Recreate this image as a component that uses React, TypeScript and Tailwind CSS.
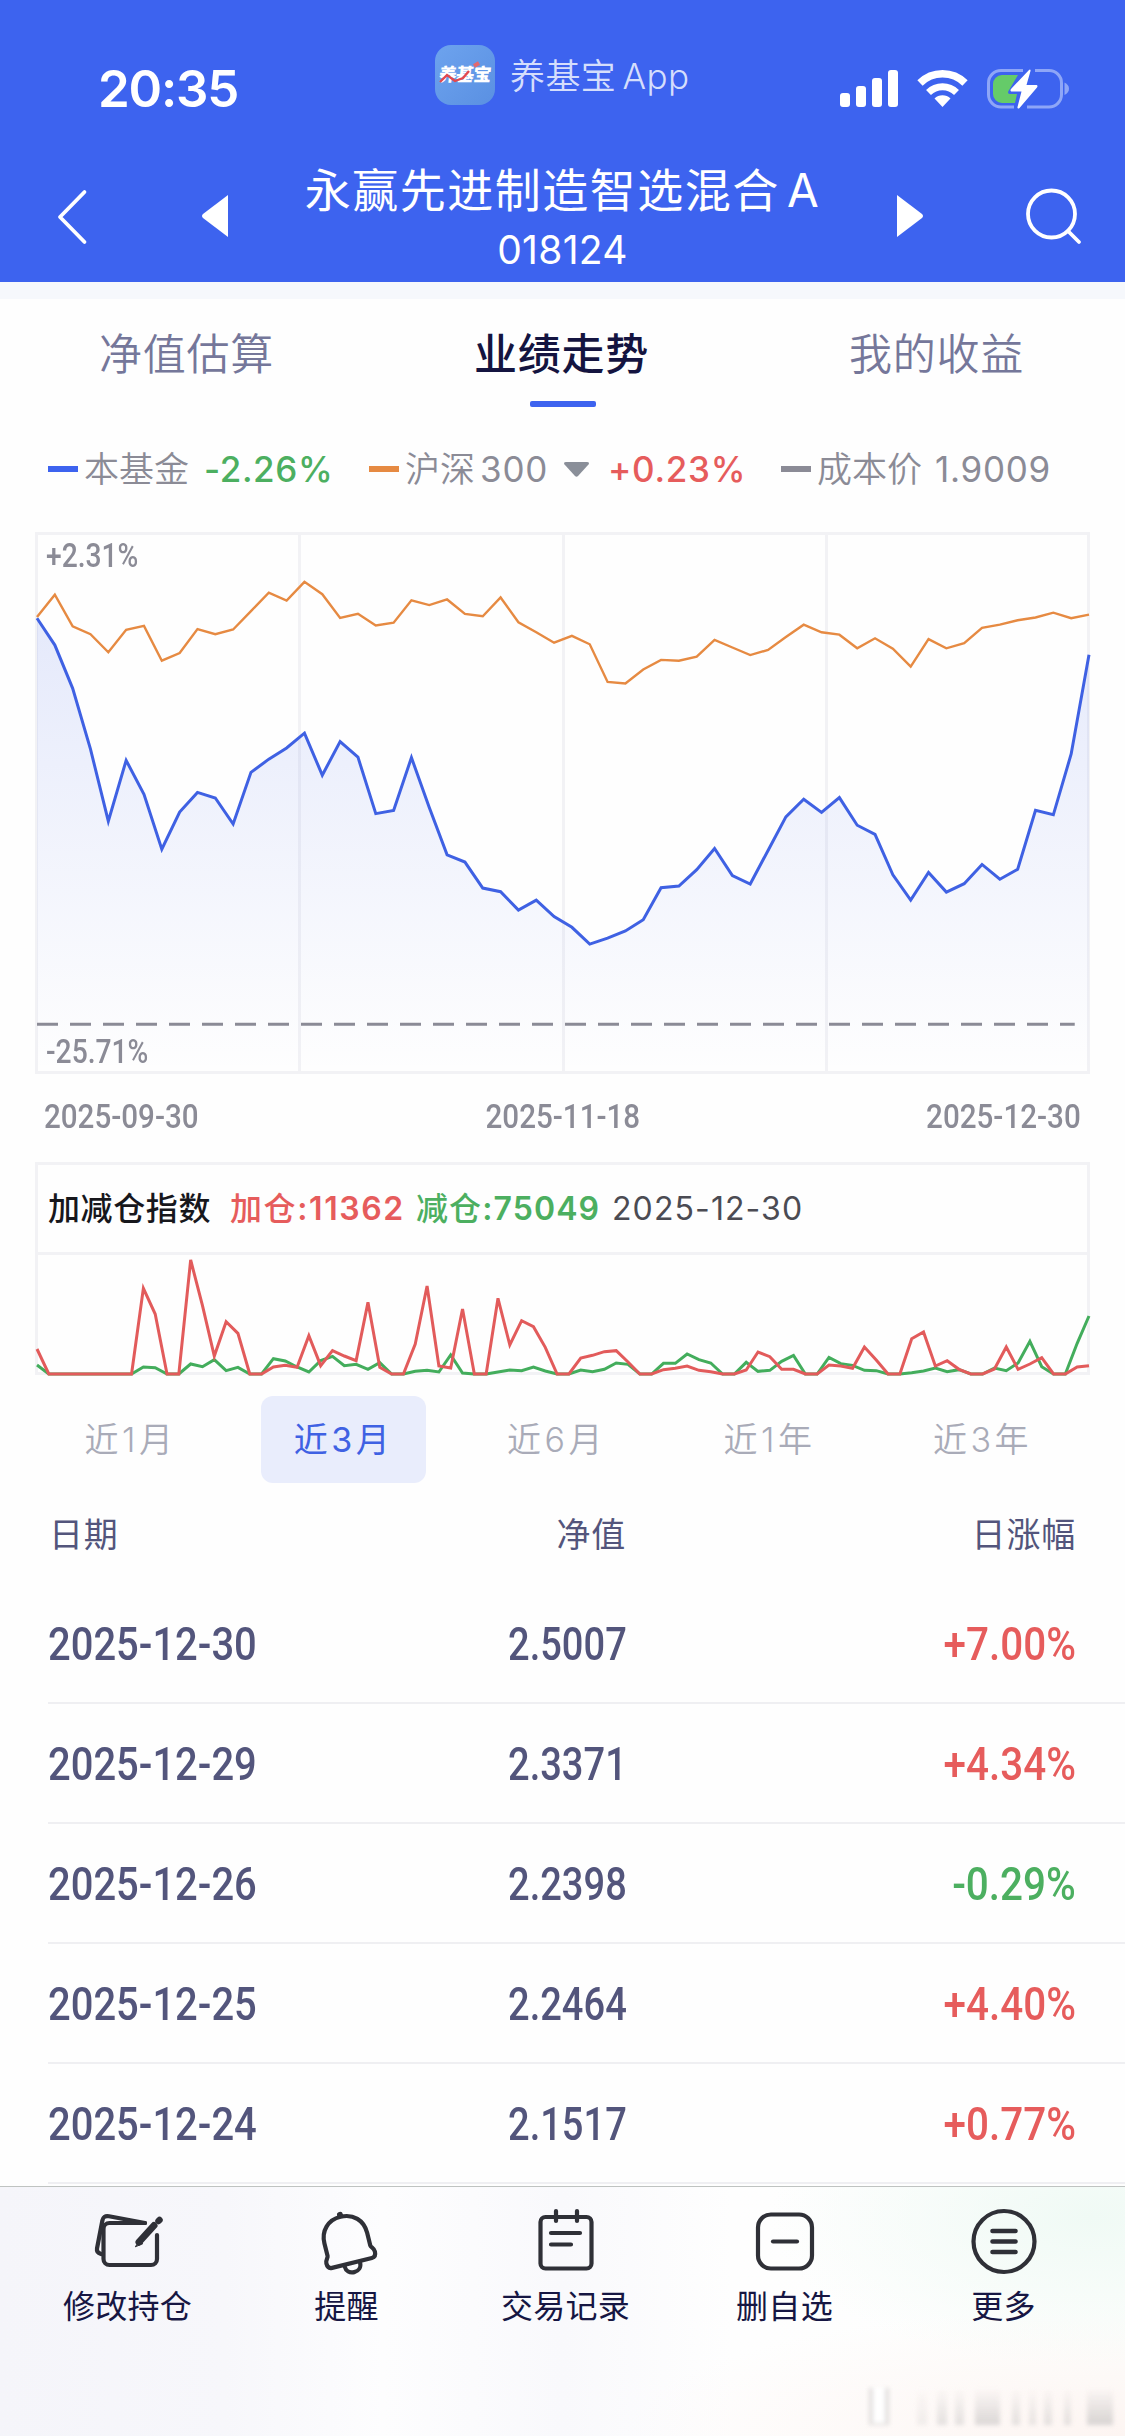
import type { ReactNode } from "react";

// y positions, one per trading day (top of the plot is 33, bottom is 1376)
const fundLine = [
  243, 310, 418, 570, 750, 598, 683, 820, 727, 678, 692, 757, 628, 595, 567, 530, 635, 551, 590, 731,
  723, 591, 716, 834, 852, 917, 926, 972, 947, 988, 1015, 1057, 1042, 1024, 996, 916, 912, 871, 818, 886,
  907, 823, 739, 695, 728, 691, 760, 783, 884, 947, 878, 927, 906, 858, 895, 870, 723, 734, 582, 334,
];

const indexLine = [
  240, 184, 263, 283, 328, 272, 262, 349, 330, 270, 283, 271, 225, 179, 199, 152, 183, 242, 232, 261,
  254, 198, 210, 196, 232, 238, 191, 253, 278, 304, 287, 308, 402, 406, 371, 347, 349, 339, 297, 316,
  335, 322, 290, 259, 278, 284, 318, 293, 319, 364, 295, 318, 305, 267, 259, 248, 241, 229, 243, 234,
];

// y positions, one per day (top of the plot is 310, bottom is 670)
const addLine = [
  592, 667, 667, 667, 667, 667, 667, 667, 667, 410, 487, 667, 667, 325, 462, 613, 510, 545, 667, 667,
  646, 641, 647, 552, 642, 597, 613, 627, 452, 647, 667, 667, 577, 403, 643, 649, 472, 667, 667, 440,
  580, 507, 525, 587, 667, 667, 619, 611, 600, 597, 631, 667, 667, 654, 650, 643, 656, 660, 667, 667,
  655, 601, 615, 653, 653, 667, 667, 640, 643, 650, 586, 625, 667, 667, 561, 541, 643, 627, 653, 667,
  667, 652, 586, 653, 637, 618, 667, 667, 646, 642,
];

const reduceLine = [
  640, 667, 667, 667, 667, 667, 667, 667, 667, 646, 648, 667, 667, 637, 645, 624, 657, 647, 667, 667,
  621, 628, 646, 661, 627, 614, 642, 638, 653, 633, 667, 667, 659, 656, 661, 610, 664, 667, 667, 661,
  655, 657, 646, 658, 667, 667, 655, 660, 653, 634, 638, 667, 667, 635, 635, 607, 624, 634, 667, 667,
  632, 659, 656, 629, 611, 667, 667, 617, 636, 641, 656, 657, 667, 667, 663, 658, 649, 660, 654, 667,
  667, 649, 657, 634, 569, 645, 667, 667, 575, 493,
];

const toPoints = (values: number[]) =>
  values.map((v, i) => `${i * 10},${v}`).join(" ");

const rows = [
  { date: "2025-12-30", value: "2.5007", change: "+7.00%" },
  { date: "2025-12-29", value: "2.3371", change: "+4.34%" },
  { date: "2025-12-26", value: "2.2398", change: "-0.29%" },
  { date: "2025-12-25", value: "2.2464", change: "+4.40%" },
  { date: "2025-12-24", value: "2.1517", change: "+0.77%" },
];

const periods = ["近1月", "近3月", "近6月", "近1年", "近3年"];

const smudges = [
  "ml-[28px] w-[10px] opacity-30",
  "ml-[10px] w-[10px] opacity-60",
  "ml-[8px] w-[9px] opacity-60",
  "ml-[11px] w-[25px] opacity-80",
  "ml-[12px] w-[8px] opacity-60",
  "ml-[9px] w-[7px] opacity-50",
  "ml-[8px] w-[8px] opacity-60",
  "ml-[12px] w-[7px] opacity-60",
  "ml-[16px] w-[26px] opacity-90",
];

function StatusBar() {
  return (
    <div className="flex h-[150px] w-full">
      <div className="flex w-[435px] items-start pt-[58px] pl-[98px]">
        <span className="text-[51px] leading-[62px] font-semibold tracking-[-1.2px] text-white">
          20:35
        </span>
      </div>
      <div className="flex w-[405px] items-start pt-[45px]">
        <div className="relative flex size-[60px] items-center justify-center rounded-[16px] bg-linear-to-br from-[#6da3ee] to-[#5a90e2]">
          <span className="-skew-x-6 text-[18px] leading-[20px] font-black tracking-[-0.8px] whitespace-nowrap text-white">
            养基宝
          </span>
          <svg className="absolute inset-0" viewBox="0 0 60 60" fill="none">
            <path d="M5 37l7-7 8 6 8-3 6-7" stroke="#e2484f" strokeWidth="2.400" />
            <path d="M39 21l5-3" stroke="#e2686f" strokeWidth="4" />
          </svg>
        </div>
        <span className="mt-[8px] ml-[15px] text-[35px] leading-[46px] font-[350] tracking-[0.4px] [word-spacing:-4px] whitespace-nowrap text-[#d5defc]">
          养基宝 App
        </span>
      </div>
      <div className="flex items-start gap-[19px] pt-[69px]">
        <svg width="58" height="39" viewBox="0 0 58 39" fill="white">
          <rect x="0" y="24" width="10" height="14" rx="3" />
          <rect x="16" y="17" width="10" height="21" rx="3" />
          <rect x="32" y="9" width="10" height="29" rx="3" />
          <rect x="48" y="1" width="10" height="37" rx="3" />
        </svg>
        <svg width="51" height="39" viewBox="0 0 51 39" fill="none">
          <path d="M3 14a32 32 0 0 1 45 0" stroke="white" strokeWidth="7.500" />
          <path d="M11.5 23.500a20 20 0 0 1 28 0" stroke="white" strokeWidth="7" />
          <path d="M25.500 38L17.500 29.500a11.500 11.500 0 0 1 16 0z" fill="white" />
        </svg>
        <svg width="84" height="41" viewBox="0 0 84 41" fill="none">
          <path
            d="M36 1.500H14a12.500 12.500 0 0 0-12.500 12.500v11.500a12.500 12.500 0 0 0 12.500 12.500h13M40 38h22a12.500 12.500 0 0 0 12.500-12.500V14a12.500 12.500 0 0 0-12.500-12.500H48"
            stroke="#8ea6f7"
            strokeWidth="3"
          />
          <path d="M77.500 13.500c3 1.500 4.500 3.500 4.500 6.200s-1.500 4.800-4.500 6.200z" fill="#8ea6f7" />
          <path
            d="M31 6H15a9 9 0 0 0-9 9v10a9 9 0 0 0 9 9h13l2-9h-7c-2 0-2.500-1.500-1.500-3z"
            fill="#65cb69"
          />
          <path
            d="M42 1L24 20c-1 1.200-.5 2.500 1 2.500h9.500L30.500 38c-.4 1.800 1 2 2 1L50 18.500c1-1.300.4-2.500-1-2.500h-9.500L43.500 2c.3-1.500-.6-2-1.500-1z"
            fill="white"
          />
        </svg>
      </div>
    </div>
  );
}

function Header() {
  return (
    <header className="h-[282px] w-full bg-[#3d63ef]">
      <StatusBar />
      <div className="flex h-[132px] items-start justify-between">
        <div className="flex w-[306px] pt-[39px] pl-[56px]">
          <svg width="32" height="56" viewBox="0 0 32 56" fill="none">
            <path
              d="M28.500 3L4 28l24.500 25"
              stroke="white"
              strokeWidth="3.800"
              strokeLinecap="round"
              strokeLinejoin="round"
            />
          </svg>
          <svg className="mt-[5px] ml-[113px]" width="28" height="44" viewBox="0 0 28 44">
            <path d="M27 1v42L2 24q-2-2 0-4z" fill="white" />
          </svg>
        </div>
        <div className="flex w-[513px] flex-col items-center pt-[10px] text-white">
          <h1 className="text-[46px] leading-[60px] font-normal tracking-[1.5px] [word-spacing:-7px] whitespace-nowrap">
            永赢先进制造智选混合 A
          </h1>
          <span className="mt-[6px] text-[39px] leading-[48px] tracking-[0.3px]">
            018124
          </span>
        </div>
        <div className="flex w-[306px] pt-[38px] pl-[77px]">
          <svg className="mt-[6px]" width="28" height="44" viewBox="0 0 28 44">
            <path d="M1 1v42l25-19q2-2 0-4z" fill="white" />
          </svg>
          <svg className="ml-[100px]" width="58" height="58" viewBox="0 0 58 58" fill="none">
            <circle cx="27.500" cy="26" r="23.500" stroke="white" strokeWidth="3.800" />
            <path d="M44 43l11 11" stroke="white" strokeWidth="3.800" strokeLinecap="round" />
          </svg>
        </div>
      </div>
    </header>
  );
}

function Tabs() {
  return (
    <nav className="grid h-[112px] grid-cols-3 text-center text-[43px] leading-[60px] tracking-[0.8px] text-[#75779a]">
      <div className="pt-[25px] pr-[2px] font-[350]">净值估算</div>
      <div className="flex flex-col items-center pt-[25px]">
        <span className="pr-[2px] font-medium text-[#141440]">业绩走势</span>
        <span className="mt-[17px] h-[6px] w-[66px] shrink-0 rounded-[2px] bg-[#3d63ef]" />
      </div>
      <div className="pt-[25px] pr-[2px] font-[350]">我的收益</div>
    </nav>
  );
}

function Legend() {
  return (
    <div className="mt-[30px] flex h-[56px] items-center pl-[48px] text-[35px] leading-[56px] whitespace-nowrap text-[#8b8b96]">
      <div className="flex w-[321px] items-center">
        <i className="mr-[6px] h-[6px] w-[30px] bg-[#3d63ef]" />
        <span className="w-[120px] font-[350]">本基金</span>
        <span className="font-medium tracking-[0.6px] text-[#4caf60]">-2.26%</span>
      </div>
      <div className="flex w-[412px] items-center">
        <i className="mr-[6px] h-[6px] w-[30px] bg-[#e68a42]" />
        <span className="w-[75px] font-[350]">沪深</span>
        <span className="w-[83px] tracking-[0.8px]">300</span>
        <svg className="mr-[18px]" width="27" height="17" viewBox="0 0 27 17">
          <path d="M3 1h21q3 0 1.500 2.500L15 15q-1.500 1.500-3 0L1.500 3.500Q0 1 3 1z" fill="#8a8f99" />
        </svg>
        <span className="font-medium tracking-[0.7px] text-[#e65c5c]">+0.23%</span>
      </div>
      <div className="flex items-center">
        <i className="mr-[6px] h-[6px] w-[30px] bg-[#8b8b96]" />
        <span className="w-[118px] font-[350]">成本价</span>
        <span className="tracking-[0.7px]">1.9009</span>
      </div>
    </div>
  );
}

// Condensed numerals used by the chart labels and the table
function Din({ children, className }: { children: ReactNode; className: string }) {
  return (
    <span className={`inline-block font-['Roboto'] font-medium ${className}`}>
      {children}
    </span>
  );
}

function TrendChart() {
  return (
    <section className="mx-[35px] mt-[35px]">
      <div className="relative h-[542px] border-[3px] border-[#f2f2f5] text-[34px] leading-[40px] text-[#8b8b96]">
        <div className="absolute -inset-x-[3px] inset-y-0 grid grid-cols-4">
          <div className="translate-x-[2px] border-r-[3px] border-[#f2f2f5]" />
          <div className="translate-x-[2px] border-r-[3px] border-[#f2f2f5]" />
          <div className="translate-x-[2px] border-r-[3px] border-[#f2f2f5]" />
          <div />
        </div>
        <svg
          className="absolute -left-[1.500px] top-0 h-full w-[1052px] overflow-visible"
          viewBox="0 35 590 1339"
          preserveAspectRatio="none"
          fill="none"
        >
          <defs>
            <linearGradient id="area" gradientUnits="userSpaceOnUse" x1="0" y1="240" x2="0" y2="1376">
              <stop offset="0" stopColor="#3d5fe8" stopOpacity="0.13" />
              <stop offset="1" stopColor="#3d5fe8" stopOpacity="0" />
            </linearGradient>
          </defs>
          <polygon points={`0,1376 ${toPoints(fundLine)} 590,1376`} fill="url(#area)" />
          <polyline
            points={toPoints(indexLine)}
            stroke="#e68a42"
            strokeWidth="2.400"
            vectorEffect="non-scaling-stroke"
          />
          <polyline
            points={toPoints(fundLine)}
            stroke="#3f61e3"
            strokeWidth="3"
            vectorEffect="non-scaling-stroke"
          />
          <line
            x1="0"
            x2="582"
            y1="1257"
            y2="1257"
            stroke="#8b8b96"
            strokeWidth="3"
            strokeDasharray="21 12"
            vectorEffect="non-scaling-stroke"
          />
        </svg>
        <div className="flex h-full flex-col items-start justify-between pl-[8px]">
          <Din className="origin-left scale-x-[0.83]">+2.31%</Din>
          <Din className="origin-left scale-x-[0.83]">-25.71%</Din>
        </div>
      </div>
      <div className="flex justify-between px-[9px] pt-[22px] text-[34px] leading-[40px] text-[#8b8b96]">
        <Din className="origin-left scale-x-[0.87]">2025-09-30</Din>
        <Din className="origin-center scale-x-[0.87]">2025-11-18</Din>
        <Din className="origin-right scale-x-[0.87]">2025-12-30</Din>
      </div>
    </section>
  );
}

function PositionIndex() {
  return (
    <section className="mx-[35px] mt-[26px] h-[213px] border-[3px] border-[#f2f2f5]">
      <div className="flex h-[90px] items-center border-b-[3px] border-[#f2f2f5] pl-[10px] text-[32px] leading-[40px] whitespace-nowrap">
        <span className="w-[182px] font-medium tracking-[0.6px] text-[#17171c]">加减仓指数</span>
        <span className="w-[186px] font-semibold tracking-[1.600px] text-[#e65c5c]">
          <span className="font-medium">加仓</span>:11362
        </span>
        <span className="w-[196px] font-semibold tracking-[1.1px] text-[#4caf60]">
          <span className="font-medium">减仓</span>:75049
        </span>
        <span className="tracking-[1.1px] text-[#4b4b53]">2025-12-30</span>
      </div>
      <svg
        className="-ml-[1.500px] h-[120px] w-[1052px] overflow-visible"
        viewBox="0 310 890 360"
        preserveAspectRatio="none"
        fill="none"
      >
        <polyline
          points={toPoints(reduceLine)}
          stroke="#43ad5c"
          strokeWidth="3"
          vectorEffect="non-scaling-stroke"
        />
        <polyline
          points={toPoints(addLine)}
          stroke="#e25b5b"
          strokeWidth="3"
          vectorEffect="non-scaling-stroke"
        />
      </svg>
    </section>
  );
}

function Periods() {
  return (
    <div className="mr-[36px] ml-[24px] mt-[21px] grid grid-cols-5 text-[34px] leading-[87px]">
      {periods.map((p) => (
        <div key={p} className="flex justify-center">
          <span
            className={
              p === "近3月"
                ? "w-[165px] rounded-[12px] bg-[#e9edfc] text-center tracking-[3.500px] text-[#3f61e3]"
                : "w-[165px] text-center font-[350] tracking-[3.500px] text-[#a9abb8]"
            }
          >
            {p}
          </span>
        </div>
      ))}
    </div>
  );
}

function NavTable() {
  return (
    <section className="h-[702px] overflow-hidden pl-[48px] text-[#53557c]">
      <div className="flex h-[100px] items-center pt-[1px] pr-[49px] text-[34px] leading-[50px] tracking-[0.8px]">
        <span className="w-[279px] pl-[1px]">日期</span>
        <span className="w-[299px] text-right">净值</span>
        <span className="flex-1 text-right">日涨幅</span>
      </div>
      {rows.map((r) => (
        <div
          key={r.date}
          className="flex h-[120px] items-center border-b-2 border-[#efeff2] pt-[1px] pr-[49px] text-[47px] leading-[60px]"
        >
          <div className="w-[460px]">
            <Din className="origin-left scale-x-[0.85]">{r.date}</Din>
          </div>
          <div className="flex-1">
            <Din className="origin-left scale-x-[0.81]">{r.value}</Din>
          </div>
          <Din
            className={
              r.change.startsWith("-")
                ? "origin-right scale-x-[0.86] text-[#4caf60]"
                : "origin-right scale-x-[0.86] text-[#e65c5c]"
            }
          >
            {r.change}
          </Din>
        </div>
      ))}
    </section>
  );
}

function Action({ label, children }: { label: string; children: ReactNode }) {
  return (
    <div className="flex flex-col items-center">
      <svg
        width="80"
        height="72"
        viewBox="0 0 80 72"
        fill="none"
        stroke="#2f3037"
        strokeWidth="4.200"
        strokeLinecap="round"
        strokeLinejoin="round"
      >
        {children}
      </svg>
      <span className="mt-[6px] text-[32px] leading-[44px] tracking-[0.3px] text-[#161643]">{label}</span>
    </div>
  );
}

function BottomBar() {
  return (
    <footer className="relative h-[250px] border-t border-[#bfc3c1] bg-[linear-gradient(90deg,#f5f5fa_0%,#f7f7fb_20%,#fdfdfe_34%,#f9f9fc_50%,#fefefe_65%,#fdfefd_100%)]">
      <div className="absolute inset-0 bg-[radial-gradient(ellipse_320px_150px_at_97%_12%,#f0faf5_0%,transparent_100%),radial-gradient(ellipse_500px_130px_at_100%_100%,#fdf5f2_0%,transparent_100%)]" />
      <div className="relative grid w-[1131px] grid-cols-[219px_219px_219px_219px_219px] pt-[20px] pl-[18px]">
        <Action label="修改持仓">
          <path d="M57 16H21.500a6 6 0 0 0-6 6v30a6 6 0 0 0 6 6H63a6 6 0 0 0 6-6V28" />
          <path d="M57 16L21 9.300c-4-.8-6 1-6.600 4.200L9 41.500c-.5 3 .8 4.500 4 5.500" />
          <path d="M51 35L66 18.500" strokeWidth="7" />
          <path d="M47.500 39.500l4-6 3 3z" fill="#2f3037" strokeWidth="1" />
          <path d="M70.500 14l1-1" strokeWidth="6.500" />
        </Action>
        <Action label="提醒">
          <g transform="rotate(-14 40 36)">
            <path d="M40 9c-13 0-22 9-22 22v13c0 2-3 3-3 7 0 4 1.500 5.500 4.500 5.500h41c3 0 4.500-1.500 4.500-5.500 0-4-3-5-3-7V31C62 18 53 9 40 9z" />
            <path d="M40 7.500V7" strokeWidth="6" />
            <path d="M32 58c0 5 3.500 8 8 8s8-3 8-8" />
          </g>
        </Action>
        <Action label="交易记录">
          <rect x="14.500" y="10" width="51" height="51.500" rx="5" />
          <path d="M30 4v10M51 4v10M25 26h29M25 37.500h20" />
        </Action>
        <Action label="删自选">
          <rect x="13" y="7.500" width="54" height="54" rx="13" />
          <path d="M28 34.500h24" />
        </Action>
        <Action label="更多">
          <circle cx="40" cy="34.500" r="30.500" />
          <path d="M28.500 24h23M28.500 34.500h23M28.500 45h23" strokeWidth="4.600" />
        </Action>
      </div>
      <div className="absolute right-[12px] bottom-[11px] flex h-[37px] blur-[2px]">
        <i className="w-[20px] border-x-[4px] border-b-2 border-[#e2dfde] bg-white" />
        {smudges.map((s, i) => (
          <i key={i} className={`bg-linear-to-b from-transparent to-[#d3d0cf] ${s}`} />
        ))}
      </div>
    </footer>
  );
}

export default function App() {
  return (
    <main className="h-[2436px] w-[1125px] overflow-hidden bg-[#fefefe] font-['Inter','Noto_Sans_CJK_SC',sans-serif]">
      <Header />
      <div className="h-[17px] bg-[#f6f8fc]" />
      <Tabs />
      <Legend />
      <TrendChart />
      <PositionIndex />
      <Periods />
      <div className="h-px" />
      <NavTable />
      <BottomBar />
    </main>
  );
}
